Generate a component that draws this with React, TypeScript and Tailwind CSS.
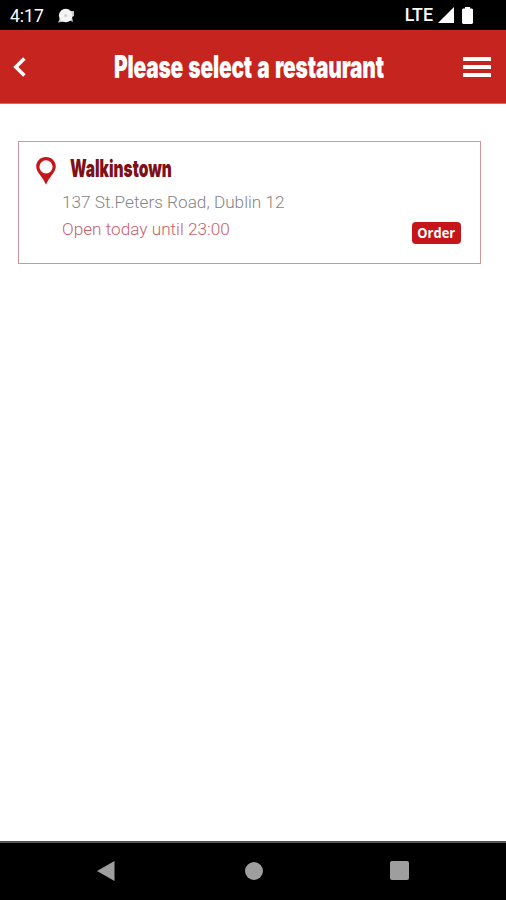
function StatusBar() {
  return (
    <div className="flex h-[30px] items-center bg-black pl-[10px] pr-[33px] text-white">
      <span className="w-[47px] pt-px text-[17.5px] leading-[32px]">4:17</span>
      <svg width="18" height="16" viewBox="0 0 18 16" className="mt-px">
        <path d="M11 3h6v5l-2 1 1 5-4-2zM3 10l-2 4.5 6-1z" fill="#c8c8c8" />
        <circle cx="8.7" cy="7.5" r="6.8" fill="#f4f4f4" />
        <circle cx="8.7" cy="7.5" r="1.6" fill="#d0d0d0" />
      </svg>
      <span className="ml-auto text-[17.8px] font-medium leading-[32px]">LTE</span>
      <svg width="16" height="16" viewBox="0 0 16 16" className="ml-[5px]">
        <path d="M16 0v16H0z" fill="#fff" />
      </svg>
      <svg width="11" height="17" viewBox="0 0 11 17" className="ml-[8px]">
        <path d="M3 0h5v1.5h2l1 1V16l-1 1H1l-1-1V2.5l1-1h2z" fill="#fff" />
      </svg>
    </div>
  );
}

function Header() {
  return (
    <header className="flex h-[74px] items-center justify-between border-b border-[#dc6864] bg-[#c6241e] pl-[13px] pr-[15px]">
      <button aria-label="Back" className="w-[22px]">
        <svg width="14" height="20" viewBox="0 0 14 20" fill="none" stroke="#fff" strokeWidth="3.6">
          <path d="M11.4 1.4L2.8 10l8.6 8.6" />
        </svg>
      </button>
      <h1 className="flex w-[272px] justify-center whitespace-nowrap font-[Inter,sans-serif] text-[31px] font-black leading-[36px] tracking-[-0.3px] text-white [word-spacing:2px]">
        <span className="scale-x-[0.675]">Please select a restaurant</span>
      </h1>
      <button aria-label="Menu" className="flex w-[28px] flex-col gap-[4px]">
        <span className="h-[4px] bg-white" />
        <span className="h-[4px] bg-white" />
        <span className="h-[4px] bg-white" />
      </button>
    </header>
  );
}

function RestaurantCard() {
  return (
    <section className="ml-[18px] mt-[37px] flex h-[123px] w-[463px] justify-between border border-[#d3959b] pl-[17px] pr-[19px]">
      <div>
        <div className="flex pt-[13px]">
          <svg width="22" height="30" viewBox="0 0 22 30" className="-ml-px mt-px">
            <path
              d="M11 1C5.4 1 1.2 5.2 1.2 10.5c0 5.7 6.6 10.3 9.8 18.3 3.2-8 9.8-12.6 9.8-18.3C20.8 5.2 16.6 1 11 1zm0 3.2a6.6 6.6 0 1 1 0 13.2 6.6 6.6 0 0 1 0-13.2z"
              fill="#c6161a"
              fillRule="evenodd"
            />
          </svg>
          <h2 className="ml-[13px] w-[102px] whitespace-nowrap font-[Inter,sans-serif] text-[24px] font-black leading-[28px] text-[#7e1118]">
            <span className="inline-block origin-left scale-x-[0.645]">Walkinstown</span>
          </h2>
        </div>
        <p className="ml-[26px] mt-[3px] whitespace-nowrap text-[17.2px] font-light leading-[27px] text-[#858585]">
          137 St.Peters Road, Dublin 12
        </p>
        <p className="ml-[26px] whitespace-nowrap text-[17.2px] font-light leading-[27px] text-[#c8606b]">
          Open today until 23:00
        </p>
      </div>
      <button className="mb-[19px] flex h-[22px] w-[49px] justify-center self-end rounded-[4px] bg-[#c6161a] font-['Open_Sans',sans-serif] text-[14.5px] font-bold leading-[21px] text-white">
        <span className="scale-x-[0.89]">Order</span>
      </button>
    </section>
  );
}

function NavBar() {
  return (
    <nav className="mt-auto flex h-[59px] items-center justify-between border-t-2 border-[#555] bg-black pb-[2px] pl-[96px] pr-[97px]">
      <svg width="19" height="22" viewBox="0 0 19 22">
        <path d="M18.5 1v20L1 11z" fill="#9e9e9e" />
      </svg>
      <span className="ml-[2px] h-[18px] w-[18px] rounded-full bg-[#9e9e9e]" />
      <span className="h-[19px] w-[19px] rounded-[2px] bg-[#9e9e9e]" />
    </nav>
  );
}

export default function App() {
  return (
    <div className="flex h-[900px] w-[506px] flex-col overflow-hidden bg-white font-[Roboto,sans-serif]">
      <StatusBar />
      <Header />
      <RestaurantCard />
      <NavBar />
    </div>
  );
}
